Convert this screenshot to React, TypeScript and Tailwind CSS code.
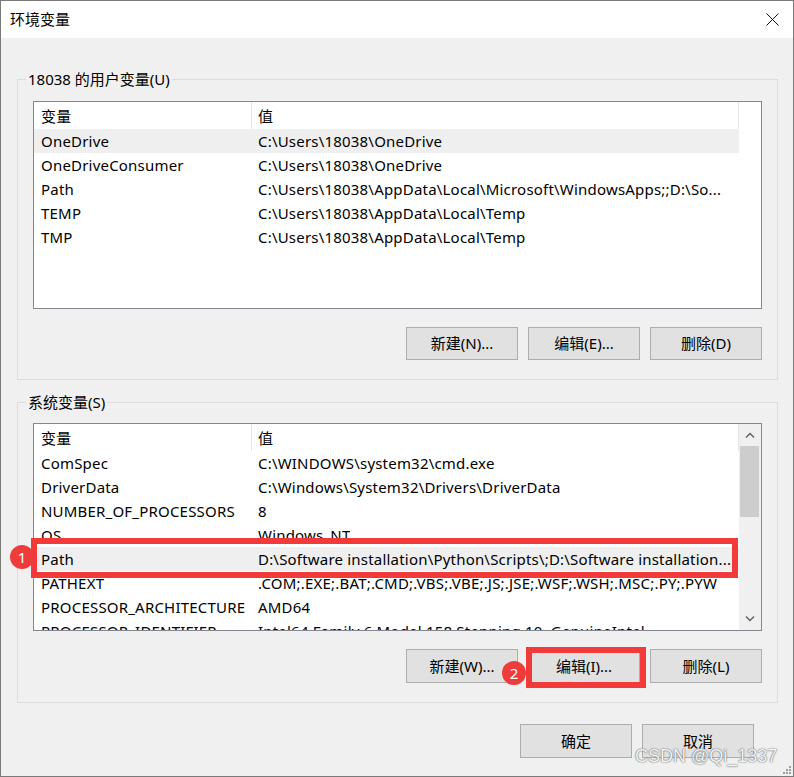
import React from 'react';

type Row = { name: string; value: string; selected?: boolean };

const userRows: Row[] = [
  { name: 'OneDrive', value: 'C:\\Users\\18038\\OneDrive', selected: true },
  { name: 'OneDriveConsumer', value: 'C:\\Users\\18038\\OneDrive' },
  { name: 'Path', value: 'C:\\Users\\18038\\AppData\\Local\\Microsoft\\WindowsApps;;D:\\So...' },
  { name: 'TEMP', value: 'C:\\Users\\18038\\AppData\\Local\\Temp' },
  { name: 'TMP', value: 'C:\\Users\\18038\\AppData\\Local\\Temp' },
];

const systemRows: Row[] = [
  { name: 'ComSpec', value: 'C:\\WINDOWS\\system32\\cmd.exe' },
  { name: 'DriverData', value: 'C:\\Windows\\System32\\Drivers\\DriverData' },
  { name: 'NUMBER_OF_PROCESSORS', value: '8' },
  { name: 'OS', value: 'Windows_NT' },
  { name: 'Path', value: 'D:\\Software installation\\Python\\Scripts\\;D:\\Software installation...', selected: true },
  { name: 'PATHEXT', value: '.COM;.EXE;.BAT;.CMD;.VBS;.VBE;.JS;.JSE;.WSF;.WSH;.MSC;.PY;.PYW' },
  { name: 'PROCESSOR_ARCHITECTURE', value: 'AMD64' },
  { name: 'PROCESSOR_IDENTIFIER', value: 'Intel64 Family 6 Model 158 Stepping 10, GenuineIntel' },
];

const font = "font-['Noto_Sans','Noto_Sans_CJK_SC',sans-serif]";

function Chevron({ up }: { up?: boolean }) {
  return (
    <svg width="10" height="6" viewBox="0 0 10 6" className={up ? '' : 'rotate-180'}>
      <path d="M1 5.5 L5 1.5 L9 5.5" fill="none" stroke="#606060" strokeWidth="1.4" />
    </svg>
  );
}

function WinButton({ label, className = '' }: { label: string; className?: string }) {
  return (
    <div
      className={`flex w-[112px] items-center justify-center border border-[#adadad] bg-[#e1e1e1] text-[15px] text-black ${className}`}
    >
      {label}
    </div>
  );
}

function VarList({ rows, scroll }: { rows: Row[]; scroll?: boolean }) {
  return (
    <div className="flex h-[208px] w-[729px] overflow-hidden border border-[#828790] bg-white">
      <div className="w-[705px] shrink-0 overflow-hidden tracking-[0.2px]">
        <div className="flex h-[27px] items-center text-[15px]">
          <div className="w-[217px] pl-[7px] pt-[1px]">变量</div>
          <div className="h-full w-[488px] border-x border-[#e5e5e5] pl-[6px] pt-[1px] leading-[26px]">值</div>
        </div>
        {rows.map((row) => (
          <div
            key={row.name}
            className={`flex h-[24px] items-center whitespace-nowrap text-[15px] ${row.selected ? 'bg-[#efefef]' : ''}`}
          >
            <div className="w-[218px] shrink-0 overflow-hidden pl-[7px]">{row.name}</div>
            <div className="overflow-hidden pl-[6px]">{row.value}</div>
          </div>
        ))}
      </div>
      {scroll && (
        <div className="flex w-[22px] flex-col bg-[#f0f0f0]">
          <div className="flex h-[22px] items-center justify-center">
            <Chevron up />
          </div>
          <div className="ml-[1px] h-[71px] w-[19px] bg-[#cdcdcd]" />
          <div className="flex-1" />
          <div className="flex h-[22px] items-center justify-center">
            <Chevron />
          </div>
        </div>
      )}
    </div>
  );
}

function GroupBox({ legend, listMt, children }: { legend: string; listMt: string; children: React.ReactNode }) {
  return (
    <div className="h-[301px] w-[761px] border border-[#dcdcdc] px-[15px]">
      <div className="-mt-[11px] ml-[-7px] h-[20px] w-fit bg-[#f0f0f0] px-[2px] text-[15px] leading-[20px]">
        {legend}
      </div>
      <div className={listMt}>{children}</div>
    </div>
  );
}

export default function App() {
  return (
    <div className={`relative h-[777px] w-[794px] overflow-hidden border border-[#7a7a7a] bg-[#f0f0f0] text-black ${font}`}>
      {/* title bar */}
      <div className="flex h-[37px] items-center justify-between bg-white pl-[9px] pr-[14px]">
        <span className="text-[15px]">环境变量</span>
        <svg width="13" height="13" viewBox="0 0 13 13">
          <path d="M0.5 0.5 L12.5 12.5 M12.5 0.5 L0.5 12.5" stroke="#111" strokeWidth="1" />
        </svg>
      </div>

      <div className="pl-[16px] pt-[41px]">
        <GroupBox legend="18038 的用户变量(U)" listMt="mt-[12px]">
          <VarList rows={userRows} />
          <div className="mt-[18px] flex h-[33px] justify-end gap-[10px]">
            <WinButton label="新建(N)..." />
            <WinButton label="编辑(E)..." />
            <WinButton label="删除(D)" />
          </div>
        </GroupBox>

        <div className="mt-[22px]">
          <GroupBox legend="系统变量(S)" listMt="mt-[11px]">
            <VarList rows={systemRows} scroll />
            <div className="mt-[18px] flex h-[34px] justify-end gap-[10px]">
              <WinButton label="新建(W)..." />
              <WinButton label="编辑(I)..." />
              <WinButton label="删除(L)" />
            </div>
          </GroupBox>
        </div>

        <div className="mt-[21px] flex h-[34px] justify-end gap-[10px] pr-[39px]">
          <WinButton label="确定" className="w-[111px]" />
          <WinButton label="取消" className="w-[111px]" />
        </div>
      </div>

      {/* annotations */}
      <div className="absolute left-[30px] top-[537px] h-[40px] w-[707px] border-[6px] border-[#f23a3a]" />
      <div className="absolute left-[9px] top-[544px] flex h-[24px] w-[24px] items-center justify-center rounded-full bg-[#ee3b3b] text-[15px] text-white">
        1
      </div>
      <div className="absolute left-[525px] top-[646px] h-[41px] w-[120px] border-[6px] border-[#f23a3a]" />
      <div className="absolute left-[501px] top-[660px] flex h-[24px] w-[24px] items-center justify-center rounded-full bg-[#ee3b3b] text-[15px] text-white">
        2
      </div>

      {/* watermark */}
      <div className="absolute left-[634px] top-[744px] font-['Liberation_Sans',sans-serif] text-[18px] leading-[22px] text-[#f4f4f4] [text-shadow:0_0_1px_#555,0_0_2px_#888]">
        CSDN @Qi_1337
      </div>
      <svg className="absolute right-[2px] bottom-[2px]" width="8" height="8" viewBox="0 0 8 8">
        <rect x="6" y="0" width="2" height="2" fill="#a0a0a0" />
        <rect x="3" y="3" width="2" height="2" fill="#a0a0a0" />
        <rect x="6" y="3" width="2" height="2" fill="#a0a0a0" />
        <rect x="0" y="6" width="2" height="2" fill="#a0a0a0" />
        <rect x="3" y="6" width="2" height="2" fill="#a0a0a0" />
        <rect x="6" y="6" width="2" height="2" fill="#a0a0a0" />
      </svg>
    </div>
  );
}
